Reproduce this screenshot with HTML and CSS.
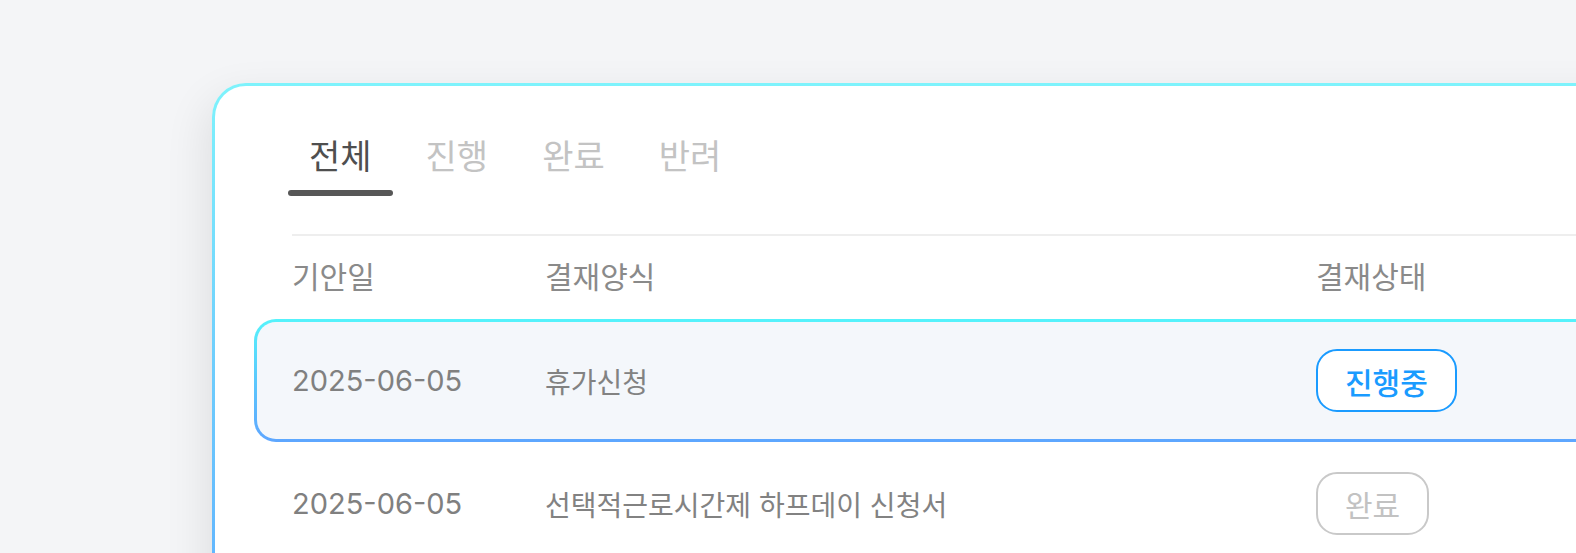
FILE: index.html
```html
<!DOCTYPE html>
<html lang="ko">
<head>
<meta charset="utf-8">
<title>결재 목록</title>
<link rel="stylesheet" href="styles.css">
</head>
<body>
<main class="page">
  <section class="card">
    <nav class="tabs">
      <button class="tab active">전체</button>
      <button class="tab">진행</button>
      <button class="tab">완료</button>
      <button class="tab">반려</button>
    </nav>
    <div class="table">
      <div class="divider"></div>
      <div class="thead">
        <span>기안일</span>
        <span>결재양식</span>
        <span>결재상태</span>
      </div>
      <div class="row selected">
        <span class="date">2025-06-05</span>
        <span class="form">휴가신청</span>
        <span><span class="badge progress">진행중</span></span>
      </div>
      <div class="row">
        <span class="date">2025-06-05</span>
        <span class="form">선택적근로시간제 하프데이 신청서</span>
        <span><span class="badge done">완료</span></span>
      </div>
    </div>
  </section>
</main>
</body>
</html>
```

FILE: styles.css
```css
html, body {
  margin: 0;
  padding: 0;
  height: 100%;
  overflow: hidden;
}

body {
  background: #f4f5f7;
  font-family: Inter, "Noto Sans CJK KR", sans-serif;
}

.page {
  padding: 83px 0 0 212px;
}

.card {
  width: 1500px;
  height: 600px;
  box-sizing: border-box;
  border: 3px solid transparent;
  border-radius: 34px;
  background:
    linear-gradient(#ffffff, #ffffff) padding-box,
    linear-gradient(180deg, #7ef3fc 0%, #6fcffd 45%, #5aa8ff 100%) border-box;
  box-shadow: -6px 14px 44px rgba(0, 0, 0, 0.09);
}

.tabs {
  display: flex;
  gap: 12px;
  padding: 52px 0 0 73px;
}

.tab {
  display: inline-flex;
  flex-direction: column;
  align-items: stretch;
  padding: 0 21px;
  border: 0;
  background: none;
  font-family: inherit;
  font-size: 34px;
  line-height: 38px;
  color: #c3c3c3;
  cursor: pointer;
}

.tab::after {
  content: "";
  display: block;
  height: 6px;
  margin: 14px -21px 0;
  border-radius: 3px;
  background: transparent;
}

.tab.active {
  color: #4f4f4f;
}

.tab.active::after {
  background: #575757;
}

.table {
  margin: 38px 0 0 39px;
}

.divider {
  height: 2px;
  margin-left: 38px;
  background: #eeeeee;
}

.thead,
.row {
  display: grid;
  grid-template-columns: 253px 771px 1fr;
  align-items: center;
}

.thead {
  padding: 24px 0 25px 38px;
  font-size: 30px;
  line-height: 34px;
  color: #8a8a8a;
}

.row {
  height: 123px;
  box-sizing: border-box;
  padding-left: 35px;
  border: 3px solid transparent;
  border-radius: 22px;
  font-size: 28px;
  color: #828282;
}

.row .date {
  font-size: 29px;
  color: #808080;
}

.row.selected {
  background:
    linear-gradient(#f4f7fb, #f4f7fb) padding-box,
    linear-gradient(180deg, #55f3fb 0%, #5bc8fd 50%, #5ea6ff 100%) border-box;
}

.badge {
  display: inline-flex;
  align-items: center;
  height: 63px;
  box-sizing: border-box;
  padding: 0 27px;
  border: 2px solid;
  border-radius: 21px;
  font-size: 30px;
  font-weight: 500;
}

.badge.progress {
  color: #1a9bff;
  border-color: #1a9bff;
  background: #ffffff;
}

.badge.done {
  color: #c2c2c2;
  border-color: #c9c9c9;
  background: #ffffff;
  font-weight: 400;
}
```
